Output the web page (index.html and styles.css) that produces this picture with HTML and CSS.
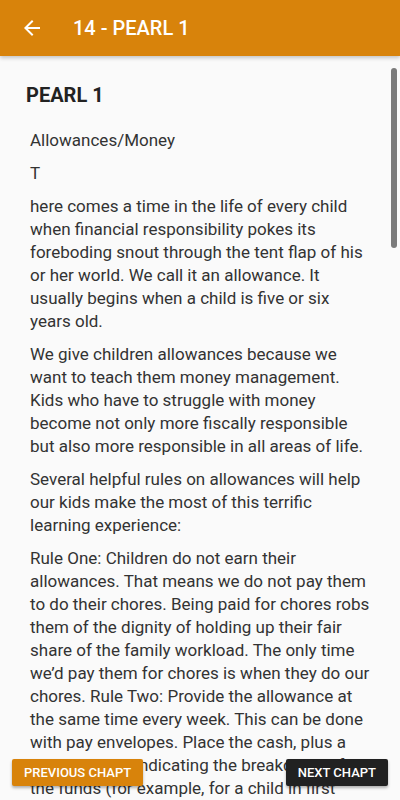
FILE: index.html
```html
<!DOCTYPE html>
<html lang="en">
<head>
<meta charset="utf-8">
<title>14 - PEARL 1</title>
<link rel="stylesheet" href="styles.css">
</head>
<body>
<div class="app">
  <header class="toolbar">
    <button class="back" aria-label="Back">
      <svg width="24" height="24" viewBox="0 0 24 24"><path d="M20 11H7.83l5.59-5.59L12 4l-8 8 8 8 1.41-1.41L7.83 13H20v-2z" fill="#fff"/></svg>
    </button>
    <div class="toolbar-title">14 - PEARL 1</div>
  </header>
  <main class="content">
    <h1 class="chapter-title">PEARL 1</h1>
    <p>Allowances/Money</p>
    <p>T</p>
    <p>here comes a time in the life of every child when financial responsibility pokes its foreboding snout through the tent flap of his or her world. We call it an allowance. It usually begins when a child is five or six years old.</p>
    <p>We give children allowances because we want to teach them money management. Kids who have to struggle with money become not only more fiscally responsible but also more responsible in all areas of life.</p>
    <p>Several helpful rules on allowances will help our kids make the most of this terrific learning experience:</p>
    <p>Rule One: Children do not earn their allowances. That means we do not pay them to do their chores. Being paid for chores robs them of the dignity of holding up their fair share of the family workload. The only time we’d pay them for chores is when they do our chores. Rule Two: Provide the allowance at the same time every week. This can be done with pay envelopes. Place the cash, plus a small receipt, indicating the breakdown of the funds (for example, for a child in first grade, a portion for saving and a portion for spending), in the envelope each week.</p>
  </main>
  <div class="scrollbar"></div>
  <nav class="chapter-nav">
    <button class="nav-btn prev">Previous Chapt</button>
    <button class="nav-btn next">Next Chapt</button>
  </nav>
</div>
</body>
</html>
```

FILE: styles.css
```css
html, body {
  margin: 0;
  padding: 0;
  height: 800px;
  overflow: hidden;
  background: #fafafa;
  font-family: Roboto, "Liberation Sans", Arial, sans-serif;
}

.app {
  position: relative;
  height: 800px;
  overflow: hidden;
  display: flex;
  flex-direction: column;
}

.toolbar {
  flex: 0 0 56px;
  height: 56px;
  background: #d8830b;
  display: flex;
  align-items: center;
  padding-left: 20px;
  box-shadow: 0 2px 4px rgba(0, 0, 0, 0.22);
  position: relative;
  z-index: 2;
}

.back {
  width: 24px;
  height: 24px;
  padding: 0;
  border: 0;
  background: none;
  display: flex;
  margin-right: 29px;
}

.toolbar-title {
  color: #fff;
  font-size: 20px;
  font-weight: 500;
  line-height: 24px;
}

.content {
  flex: 1;
  padding: 27px 26px 0;
  color: #333;
}

.chapter-title {
  margin: 0 0 22px;
  font-size: 20px;
  font-weight: 700;
  line-height: 24px;
  color: #222;
}

.content p {
  margin: 0 0 10px;
  padding: 0 4px;
  font-size: 17px;
  line-height: 23px;
}

.scrollbar {
  position: absolute;
  top: 68px;
  right: 3px;
  width: 6px;
  height: 180px;
  border-radius: 3px;
  background: #7b7b7b;
}

.chapter-nav {
  position: absolute;
  left: 12px;
  right: 12px;
  bottom: 14px;
  display: flex;
  justify-content: space-between;
}

.nav-btn {
  height: 27px;
  padding: 0 12px;
  border: 0;
  border-radius: 2px;
  font-family: Roboto, "Liberation Sans", Arial, sans-serif;
  font-size: 13px;
  font-weight: 500;
  text-transform: uppercase;
  color: #fff;
  box-shadow: 0 2px 3px rgba(0, 0, 0, 0.3);
}

.prev {
  background: #d8830b;
}

.next {
  background: #212121;
}
```
